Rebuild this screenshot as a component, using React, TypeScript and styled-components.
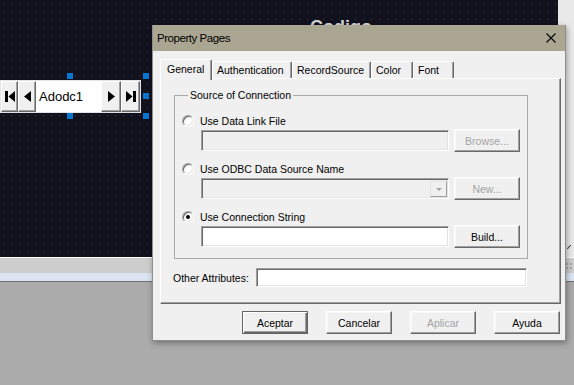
import React from 'react';
import styled, { createGlobalStyle } from 'styled-components';

const Global = createGlobalStyle`
  html, body { margin: 0; padding: 0; background: #ababab; }
  body { font-family: "Liberation Sans", Arial, sans-serif; }
  #root { width: 574px; height: 385px; overflow: hidden; }
  * { box-sizing: border-box; }
`;

const Screen = styled.div`
  position: relative;
  width: 574px;
  height: 385px;
  overflow: hidden;
  background: #ababab;
  display: flex;
  flex-direction: column;
`;

const DesignerRow = styled.div`
  display: flex;
  height: 257px;
`;

const Canvas = styled.div`
  position: relative;
  width: 558px;
  background-color: #12121f;
  background-image: radial-gradient(circle at 0.5px 0.5px, #3f3f4c 0.6px, transparent 0.65px);
  background-size: 8px 8px;
  background-position: 3px 3px;
`;

const RightStrip = styled.div`
  flex: 1;
  background: #e9e9e9;
  display: flex;
  align-items: flex-end;
  justify-content: flex-end;
  padding: 0 3px 8px 0;
`;

const WhiteLine = styled.div`
  height: 1px;
  background: #ffffff;
`;

const StatusBand = styled.div`
  height: 15px;
  background: #cdcdcd;
  display: flex;
  justify-content: flex-end;
  align-items: center;
  padding-right: 2px;
`;

const BlueBand = styled.div`
  height: 8px;
  background: #dae5f1;
`;

const DarkLine = styled.div`
  height: 1px;
  background: #6f6f6f;
`;

const FormTitle = styled.div`
  position: absolute;
  left: 310px;
  top: 18px;
  font-size: 18px;
  line-height: 18px;
  font-weight: bold;
  color: #d6d6d6;
`;

const DataControl = styled.div`
  position: absolute;
  left: 0;
  top: 80px;
  width: 141px;
  height: 33px;
  display: flex;
  border: 1px solid #e4e4e4;
  background: #ffffff;
`;

const NavButton = styled.div<{ $w: number }>`
  width: ${p => p.$w}px;
  height: 100%;
  flex: none;
  background: #f0f0f0;
  border: 1px solid;
  border-color: #ffffff #696969 #696969 #ffffff;
  box-shadow: inset -1px -1px 0 #a0a0a0;
  display: flex;
  align-items: center;
  justify-content: center;
`;

const Caption = styled.div`
  flex: 1;
  background: #ffffff;
  display: flex;
  align-items: center;
  padding-left: 3px;
  font-size: 13px;
  color: #000;
`;

const Handle = styled.span<{ $x: number; $y: number }>`
  position: absolute;
  left: ${p => p.$x}px;
  top: ${p => p.$y}px;
  width: 6px;
  height: 6px;
  background: #0877d3;
`;

const Dialog = styled.div`
  position: absolute;
  left: 152px;
  top: 25px;
  width: 414px;
  background: #f0f0f0;
  border: 1px solid #8e8e8e;
  border-top: none;
  box-shadow: 1px 2px 6px rgba(0, 0, 0, 0.35);
  display: flex;
  flex-direction: column;
  font-size: 10.5px;
  color: #000;
`;

const TitleBar = styled.div`
  height: 26px;
  background: #aba692;
  display: flex;
  align-items: center;
  justify-content: space-between;
  padding: 0 9px 1px 4px;
  font-size: 11.5px;
  letter-spacing: -0.45px;
  color: #000;
`;

const Body = styled.div`
  display: flex;
  flex-direction: column;
  padding: 8px 4px 6px 7px;
`;

const TabStrip = styled.div`
  display: flex;
  align-items: flex-end;
  height: 19px;
  position: relative;
  z-index: 1;
`;

const Tab = styled.div<{ $w: number; $active?: boolean }>`
  width: ${p => p.$w}px;
  height: ${p => (p.$active ? 21 : 17)}px;
  margin-bottom: ${p => (p.$active ? -2 : 0)}px;
  padding: ${p => (p.$active ? '0 0 2px 6px' : '0 0 0 4px')};
  background: #f0f0f0;
  border-top: 1px solid #ffffff;
  border-left: 1px solid #ffffff;
  border-right: 1px solid #696969;
  box-shadow: inset -1px 0 0 #a0a0a0;
  border-radius: 2px 2px 0 0;
  display: flex;
  align-items: center;
  white-space: nowrap;
`;

const Panel = styled.div`
  height: 226px;
  border-top: 1px solid #ffffff;
  border-left: 1px solid #ffffff;
  border-right: 1px solid #696969;
  border-bottom: 1px solid #696969;
  box-shadow: inset -1px -1px 0 #a0a0a0;
  padding: 10px 0 0 12px;
  display: flex;
  flex-direction: column;
`;

const Group = styled.fieldset`
  margin: 0 0 0 1px;
  width: 354px;
  min-width: 0;
  border: 1px solid #a9a9a9;
  padding: 13px 6px 10px 7px;
  display: flex;
  flex-direction: column;
  gap: 10px;
`;

const GroupLegend = styled.legend`
  margin-left: 6px;
  padding: 0 2px;
  line-height: 12px;
  font-size: 10.5px;
`;

const Option = styled.div`
  display: flex;
  flex-direction: column;
`;

const RadioLine = styled.label`
  display: flex;
  align-items: center;
  height: 14px;
  gap: 6px;
`;

const RadioMark = styled.span<{ $checked?: boolean }>`
  position: relative;
  width: 12px;
  height: 12px;
  flex: none;
  border-radius: 50%;
  background: #ffffff;
  border: 1px solid;
  border-color: #a0a0a0 #ffffff #ffffff #a0a0a0;
  box-shadow: inset 1px 1px 0 #696969, inset -1px -1px 0 #e3e3e3;
  &::after {
    content: '';
    display: ${p => (p.$checked ? 'block' : 'none')};
    position: absolute;
    left: 3px;
    top: 3px;
    width: 4px;
    height: 4px;
    border-radius: 50%;
    background: #000;
  }
`;

const ControlRow = styled.div`
  display: flex;
  align-items: center;
  height: 23px;
  margin: 1px 0 0 19px;
  gap: 5px;
`;

const TextBox = styled.div<{ $w: number; $h?: number; $disabled?: boolean }>`
  position: relative;
  width: ${p => p.$w}px;
  height: ${p => p.$h ?? 21}px;
  flex: none;
  background: ${p => (p.$disabled ? '#f0f0f0' : '#ffffff')};
  border: 1px solid;
  border-color: #a0a0a0 #ffffff #ffffff #a0a0a0;
  box-shadow: inset 1px 1px 0 #696969, inset -1px -1px 0 #e3e3e3;
  display: flex;
  justify-content: flex-end;
  padding: 2px 1px 1px 2px;
`;

const DropButton = styled.div`
  width: 17px;
  height: 100%;
  background: #f0f0f0;
  border: 1px solid;
  border-color: #e3e3e3 #a0a0a0 #a0a0a0 #e3e3e3;
  display: flex;
  align-items: center;
  justify-content: center;
`;

const Button = styled.div<{ $default?: boolean; $disabled?: boolean }>`
  width: 66px;
  height: 23px;
  flex: none;
  background: #f0f0f0;
  display: flex;
  align-items: center;
  justify-content: center;
  color: ${p => (p.$disabled ? '#a3a3a3' : '#000')};
  border: 1px solid;
  border-color: ${p => (p.$default ? '#646464' : '#ffffff #696969 #696969 #ffffff')};
  box-shadow: ${p =>
    p.$default
      ? 'inset 1px 1px 0 #ffffff, inset -1px -1px 0 #696969, inset -2px -2px 0 #a0a0a0'
      : 'inset -1px -1px 0 #a0a0a0, inset 1px 1px 0 #f8f8f8'};
`;

const AttrRow = styled.div`
  display: flex;
  align-items: center;
  height: 19px;
  margin-top: 9px;
`;

const AttrLabel = styled.span`
  width: 83px;
  flex: none;
`;

const ButtonRow = styled.div`
  display: flex;
  justify-content: flex-end;
  gap: 18px;
  margin-top: 7px;
  padding-right: 1px;
`;

const FirstIcon = () => (
  <svg width="10" height="11" viewBox="0 0 10 11">
    <rect x="0" y="0" width="3" height="11" fill="#000" />
    <polygon points="10,0 10,11 3.5,5.5" fill="#000" />
  </svg>
);
const PrevIcon = () => (
  <svg width="7" height="11" viewBox="0 0 7 11">
    <polygon points="7,0 7,11 0,5.5" fill="#000" />
  </svg>
);
const NextIcon = () => (
  <svg width="7" height="11" viewBox="0 0 7 11">
    <polygon points="0,0 0,11 7,5.5" fill="#000" />
  </svg>
);
const LastIcon = () => (
  <svg width="10" height="11" viewBox="0 0 10 11">
    <polygon points="0,0 0,11 6.5,5.5" fill="#000" />
    <rect x="7" y="0" width="3" height="11" fill="#000" />
  </svg>
);

const CloseIcon = () => (
  <svg width="10" height="10" viewBox="0 0 10 10">
    <path d="M0.5 0.5 L9.5 9.5 M9.5 0.5 L0.5 9.5" stroke="#000" strokeWidth="1.1" fill="none" />
  </svg>
);

const DropArrow = () => (
  <svg width="6" height="3" viewBox="0 0 6 3">
    <polygon points="0,0 6,0 3,3" fill="#a0a0a0" />
  </svg>
);

const Grip = () => (
  <svg width="6" height="6" viewBox="0 0 6 6">
    <rect x="0" y="0" width="2" height="2" fill="#a8a8a8" />
    <rect x="4" y="0" width="2" height="2" fill="#a8a8a8" />
    <rect x="0" y="4" width="2" height="2" fill="#a8a8a8" />
    <rect x="4" y="4" width="2" height="2" fill="#a8a8a8" />
  </svg>
);

const ResizeMark = () => (
  <svg width="4" height="4" viewBox="0 0 4 4">
    <path d="M0 4 L4 0" stroke="#555" strokeWidth="1.2" />
  </svg>
);

const tabs = [
  { label: 'General', w: 52, active: true },
  { label: 'Authentication', w: 80 },
  { label: 'RecordSource', w: 79 },
  { label: 'Color', w: 42 },
  { label: 'Font', w: 41 },
];

export default function App() {
  return (
    <>
      <Global />
      <Screen>
        <DesignerRow>
          <Canvas>
            <FormTitle>Codigo</FormTitle>
            <DataControl>
              <NavButton $w={17}><FirstIcon /></NavButton>
              <NavButton $w={18}><PrevIcon /></NavButton>
              <Caption>Adodc1</Caption>
              <NavButton $w={20}><NextIcon /></NavButton>
              <NavButton $w={19}><LastIcon /></NavButton>
            </DataControl>
            <Handle $x={67} $y={73} />
            <Handle $x={143} $y={73} />
            <Handle $x={143} $y={93} />
            <Handle $x={67} $y={113} />
            <Handle $x={143} $y={113} />
          </Canvas>
          <RightStrip>
            <ResizeMark />
          </RightStrip>
        </DesignerRow>
        <WhiteLine />
        <StatusBand>
          <Grip />
        </StatusBand>
        <BlueBand />
        <DarkLine />

        <Dialog>
          <TitleBar>
            <span>Property Pages</span>
            <CloseIcon />
          </TitleBar>
          <Body>
            <TabStrip>
              {tabs.map(t => (
                <Tab key={t.label} $w={t.w} $active={t.active}>
                  {t.label}
                </Tab>
              ))}
            </TabStrip>
            <Panel>
              <Group>
                <GroupLegend>Source of Connection</GroupLegend>
                <Option>
                  <RadioLine>
                    <RadioMark />
                    Use Data Link File
                  </RadioLine>
                  <ControlRow>
                    <TextBox $w={248} $disabled />
                    <Button $disabled>Browse...</Button>
                  </ControlRow>
                </Option>
                <Option>
                  <RadioLine>
                    <RadioMark />
                    Use ODBC Data Source Name
                  </RadioLine>
                  <ControlRow>
                    <TextBox $w={248} $disabled>
                      <DropButton>
                        <DropArrow />
                      </DropButton>
                    </TextBox>
                    <Button $disabled>New...</Button>
                  </ControlRow>
                </Option>
                <Option>
                  <RadioLine>
                    <RadioMark $checked />
                    Use Connection String
                  </RadioLine>
                  <ControlRow>
                    <TextBox $w={248} />
                    <Button>Build...</Button>
                  </ControlRow>
                </Option>
              </Group>
              <AttrRow>
                <AttrLabel>Other Attributes:</AttrLabel>
                <TextBox $w={271} $h={19} />
              </AttrRow>
            </Panel>
            <ButtonRow>
              <Button $default>Aceptar</Button>
              <Button>Cancelar</Button>
              <Button $disabled>Aplicar</Button>
              <Button>Ayuda</Button>
            </ButtonRow>
          </Body>
        </Dialog>
      </Screen>
    </>
  );
}
